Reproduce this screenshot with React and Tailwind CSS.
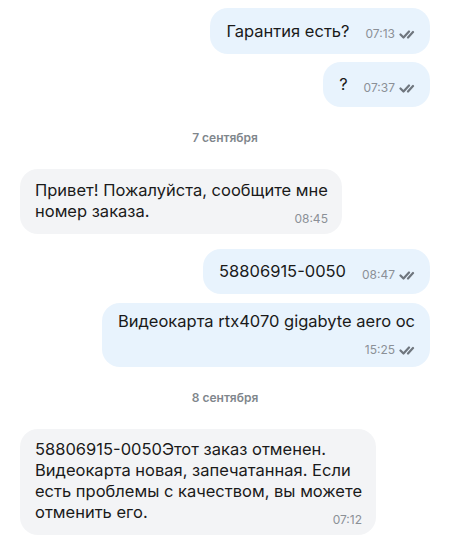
import React from 'react';

const font = { fontFamily: 'Inter, "Noto Sans", sans-serif' };

const Checks = () => (
  <svg className="ml-[4px] h-[10px] w-[16px] text-[#6f767e]" viewBox="0 0 16 10" fill="none" stroke="currentColor" strokeWidth="2.2" strokeLinecap="round" strokeLinejoin="round">
    <path d="M1.5 5.5l3 3L10 2.5" />
    <path d="M9 8.5l5-5.5" />
  </svg>
);

const Time = ({ value, read, className = '' }) => (
  <span className={`inline-flex shrink-0 items-center text-[12px] leading-[12px] text-[#8b9097] ${className}`}>
    {value}
    {read && <Checks />}
  </span>
);

const DateLabel = ({ children }) => (
  <div className="flex h-[62px] items-center justify-center text-[12px] font-semibold text-[#80868c]">{children}</div>
);

const Outgoing = ({ text, time, h }) => (
  <div className="flex justify-end">
    <div className={`flex items-center rounded-[18px] bg-[#e8f3fd] pl-4 pr-[15px] text-[16.5px] leading-[21px] text-[#1a1a1a] ${h}`}>
      <span>{text}</span>
      <Time value={time} read className="ml-4 translate-y-[3px]" />
    </div>
  </div>
);

const Incoming = ({ lines, time, pt }) => (
  <div className="flex justify-start">
    <div className={`rounded-[18px] bg-[#f3f4f6] pl-[15px] pr-[14px] pb-[12px] text-[16.5px] leading-[21px] text-[#1a1a1a] ${pt}`}>
      {lines.slice(0, -1).map((l) => (
        <div key={l}>{l}</div>
      ))}
      <div className="flex items-end justify-between">
        <span>{lines[lines.length - 1]}</span>
        <Time value={time} className="ml-3 translate-y-[3px]" />
      </div>
    </div>
  </div>
);

export default function App() {
  return (
    <div className="min-h-[545px] bg-white px-5 pt-[8px]" style={font}>
      <div className="flex flex-col gap-[8px]">
        <Outgoing text="Гарантия есть?" time="07:13" h="h-[46px]" />
        <Outgoing text="?" time="07:37" h="h-[45px]" />
      </div>
      <DateLabel>7 сентября</DateLabel>
      <Incoming lines={['Привет! Пожалуйста, сообщите мне', 'номер заказа.']} time="08:45" pt="pt-[11px]" />
      <div className="mt-[15px] flex flex-col gap-[9px]">
        <Outgoing text="58806915-0050" time="08:47" h="h-[45px]" />
        <div className="flex justify-end">
          <div className="rounded-[18px] bg-[#e8f3fd] pl-4 pr-[15px] pt-[8px] pb-[11px] text-[16.5px] leading-[21px] text-[#1a1a1a]">
            <div>Видеокарта rtx4070 gigabyte aero oc</div>
            <div className="mt-[12px] flex justify-end">
              <Time value="15:25" read />
            </div>
          </div>
        </div>
      </div>
      <DateLabel>8 сентября</DateLabel>
      <Incoming
        lines={[
          '58806915-0050Этот заказ отменен.',
          'Видеокарта новая, запечатанная. Если',
          'есть проблемы с качеством, вы можете',
          'отменить его.',
        ]}
        time="07:12"
        pt="pt-[10px]"
      />
    </div>
  );
}
